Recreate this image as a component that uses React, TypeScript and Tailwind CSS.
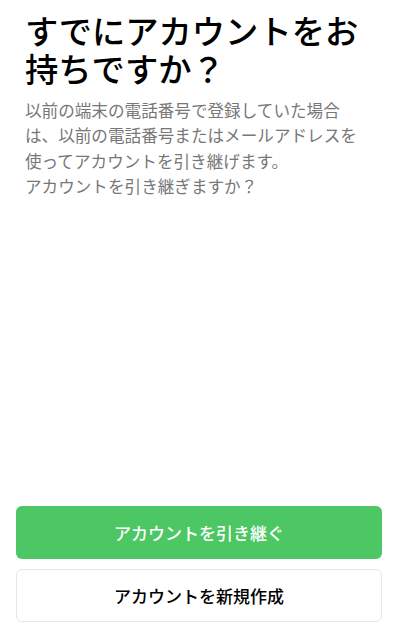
export default function App() {
  const font = { fontFamily: '"Noto Sans CJK JP", "Noto Sans", sans-serif' };
  return (
    <div className="flex h-[627px] w-[400px] flex-col bg-white" style={font}>
      <div className="px-[25px] pt-[11px]">
        <h1 className="text-[33.3px] font-medium leading-[38px] text-black">
          すでにアカウントをお<br />持ちですか？
        </h1>
        <p className="mt-[11px] w-[340px] text-[16.6px] leading-[25.3px] text-[#777777]">
          以前の端末の電話番号で登録していた場合は、以前の電話番号またはメールアドレスを使ってアカウントを引き継げます。
          <br />
          アカウントを引き継ぎますか？
        </p>
      </div>
      <div className="flex-1" />
      <div className="flex flex-col gap-[10px] pl-[16px] pr-[18px] pb-[5px]">
        <button className="flex h-[53px] items-center justify-center rounded-[6px] bg-[#4cc764] text-[17px] font-medium text-white">
          アカウントを引き継ぐ
        </button>
        <button className="flex h-[53px] items-center justify-center rounded-[6px] border border-[#e6e6e6] bg-white text-[17px] font-medium text-black">
          アカウントを新規作成
        </button>
      </div>
    </div>
  );
}
